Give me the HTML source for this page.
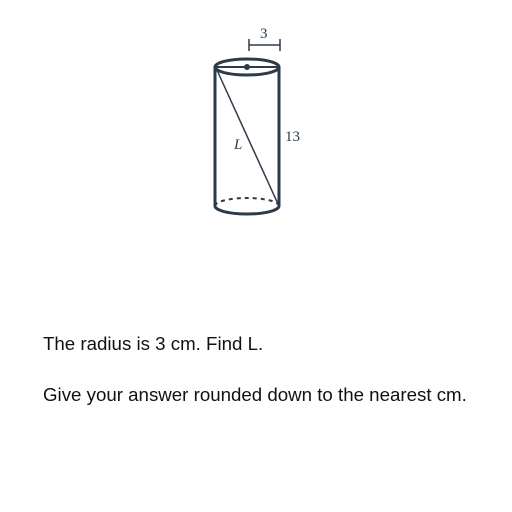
<!DOCTYPE html>
<html><head><style>
html,body{margin:0;padding:0;background:#fff;width:512px;height:512px;overflow:hidden;}
.t{position:absolute;left:43px;font-family:"Liberation Sans",sans-serif;font-size:18.7px;color:#111;}
</style></head><body>
<svg width="512" height="512" style="position:absolute;left:0;top:0">
<g stroke="#2c3a4a" fill="none" stroke-width="3">
<line x1="215" y1="67" x2="215" y2="206"/>
<line x1="279" y1="67" x2="279" y2="206"/>
<ellipse cx="247" cy="67" rx="32" ry="8"/>
<path d="M215 206 A32 8 0 0 0 279 206"/>
<path d="M215 206 A32 8 0 0 1 279 206" stroke-width="2" stroke-dasharray="4 4"/>
<line x1="215" y1="67" x2="279" y2="67" stroke-width="2"/>
<line x1="216" y1="68" x2="278" y2="204" stroke-width="1.5"/>
<line x1="249" y1="45" x2="280" y2="45" stroke-width="1.5"/>
<line x1="249" y1="39" x2="249" y2="51" stroke-width="1.5"/>
<line x1="280" y1="39" x2="280" y2="51" stroke-width="1.5"/>
</g>
<circle cx="247" cy="67" r="3" fill="#2c3a4a"/>
<g font-family="Liberation Serif,serif" font-size="15" fill="#2c3a4a">
<text x="260" y="38">3</text>
<text x="285" y="141">13</text>
<text x="234" y="149" font-style="italic">L</text>
</g>
</svg>
<div class="t" style="top:333px">The radius is 3 cm. Find L.</div>
<div class="t" style="top:384px">Give your answer rounded down to the nearest cm.</div>
</body></html>
